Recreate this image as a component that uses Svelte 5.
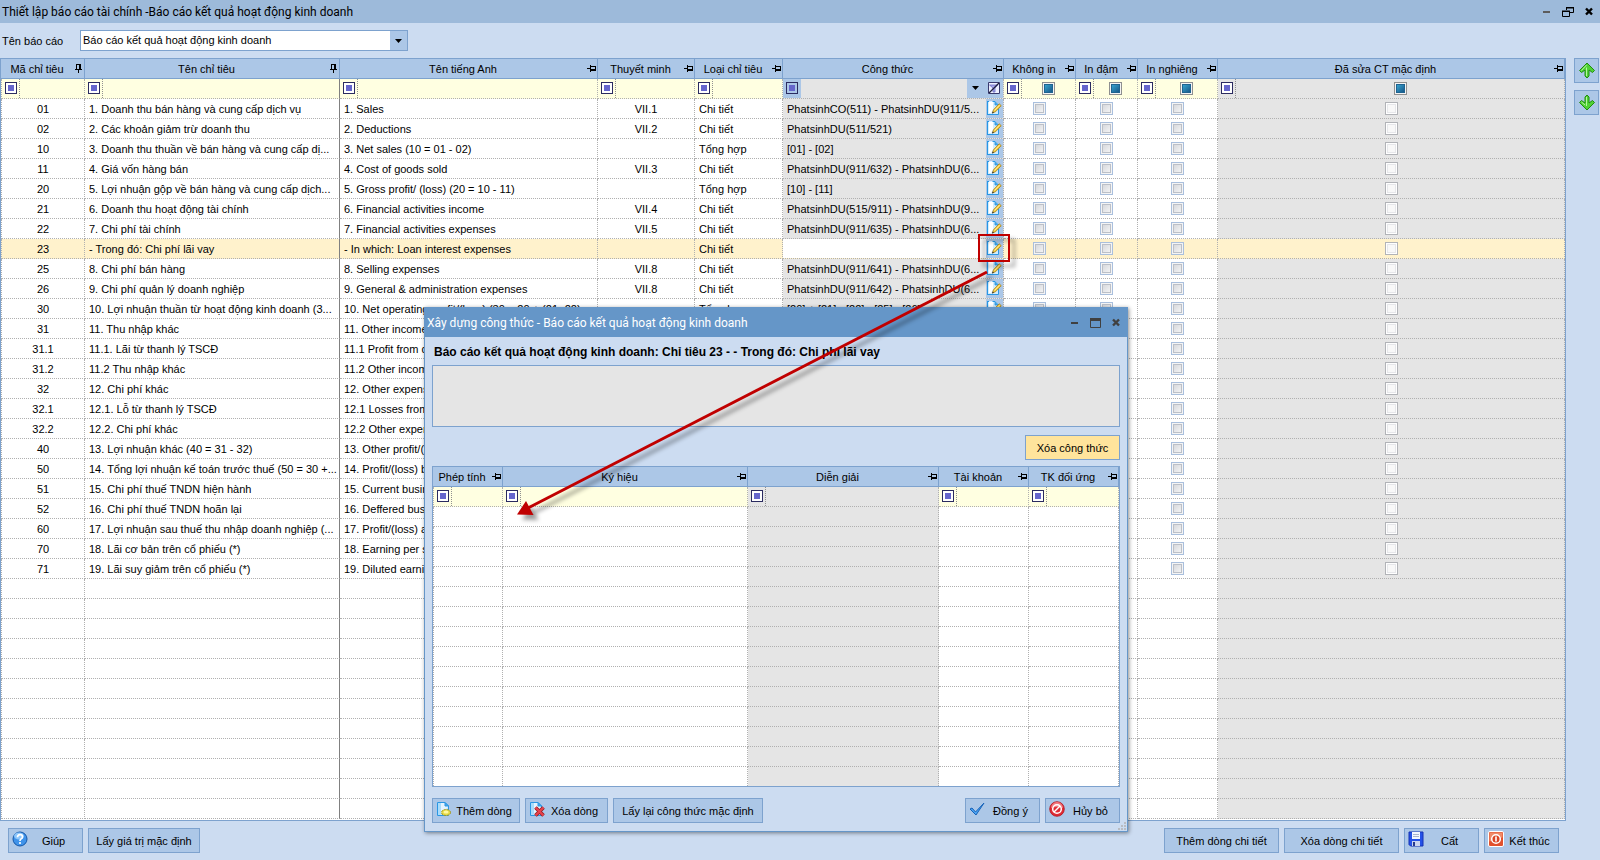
<script lang="ts">
  type Row = {
    code: string;
    name: string;
    english: string;
    note: string;
    kind: string;
    formula: string;
  };

  const detail = 'Chi tiết';
  const total = 'Tổng hợp';

  const source: string[][] = [
    ['01', '1. Doanh thu bán hàng và cung cấp dịch vụ', '1. Sales', 'VII.1', detail, 'PhatsinhCO(511) - PhatsinhDU(911/5...'],
    ['02', '2. Các khoản giảm trừ doanh thu', '2. Deductions', 'VII.2', detail, 'PhatsinhDU(511/521)'],
    ['10', '3. Doanh thu thuần về bán hàng và cung cấp dị...', '3. Net sales (10 = 01 - 02)', '', total, '[01] - [02]'],
    ['11', '4. Giá vốn hàng bán', '4. Cost of goods sold', 'VII.3', detail, 'PhatsinhDU(911/632) - PhatsinhDU(6...'],
    ['20', '5. Lợi nhuận gộp về bán hàng và cung cấp dịch...', '5. Gross profit/ (loss) (20 = 10 - 11)', '', total, '[10] - [11]'],
    ['21', '6. Doanh thu hoạt động tài chính', '6. Financial activities income', 'VII.4', detail, 'PhatsinhDU(515/911) - PhatsinhDU(9...'],
    ['22', '7. Chi phí tài chính', '7. Financial activities expenses', 'VII.5', detail, 'PhatsinhDU(911/635) - PhatsinhDU(6...'],
    ['23', '- Trong đó: Chi phí lãi vay', '- In which: Loan interest expenses', '', detail, ''],
    ['25', '8. Chi phí bán hàng', '8. Selling expenses', 'VII.8', detail, 'PhatsinhDU(911/641) - PhatsinhDU(6...'],
    ['26', '9. Chi phí quản lý doanh nghiệp', '9. General & administration expenses', 'VII.8', detail, 'PhatsinhDU(911/642) - PhatsinhDU(6...'],
    ['30', '10. Lợi nhuận thuần từ hoạt động kinh doanh (3...', '10. Net operating profit/(loss) (30 = 20 + (21- 22)', '', total, '[20] + [21] - [22] - [25] - [26]'],
    ['31', '11. Thu nhập khác', '11. Other income', '', detail, ''],
    ['31.1', '11.1. Lãi từ thanh lý TSCĐ', '11.1 Profit from disposal', '', detail, ''],
    ['31.2', '11.2 Thu nhập khác', '11.2 Other income', '', detail, ''],
    ['32', '12. Chi phí khác', '12. Other expenses', '', detail, ''],
    ['32.1', '12.1. Lỗ từ thanh lý TSCĐ', '12.1 Losses from disposal', '', detail, ''],
    ['32.2', '12.2. Chi phí khác', '12.2 Other expenses', '', detail, ''],
    ['40', '13. Lợi nhuận khác (40 = 31 - 32)', '13. Other profit/(loss)', '', total, ''],
    ['50', '14. Tổng lợi nhuận kế toán trước thuế (50 = 30 +...', '14. Profit/(loss) before tax', '', total, ''],
    ['51', '15. Chi phí thuế TNDN hiện hành', '15. Current business tax', '', detail, ''],
    ['52', '16. Chi phí thuế TNDN hoãn lại', '16. Deffered business tax', '', detail, ''],
    ['60', '17. Lợi nhuận sau thuế thu nhập doanh nghiệp (...', '17. Profit/(loss) after tax', '', total, ''],
    ['70', '18. Lãi cơ bản trên cổ phiếu (*)', '18. Earning per share', '', detail, ''],
    ['71', '19. Lãi suy giảm trên cổ phiếu (*)', '19. Diluted earning per share', '', detail, '']
  ];

  const rows: Row[] = source.map(([code, name, english, note, kind, formula]) => ({
    code, name, english, note, kind, formula
  }));

  const emptyRows = Array.from({ length: 12 });
  const dialogRows = Array.from({ length: 14 });

  const columns = [
    { title: 'Mã chỉ tiêu', cls: 'code', pinned: true, filter: 'text' },
    { title: 'Tên chỉ tiêu', cls: 'name', pinned: true, filter: 'text' },
    { title: 'Tên tiếng Anh', cls: 'english', pinned: false, filter: 'text' },
    { title: 'Thuyết minh', cls: 'note', pinned: false, filter: 'text' },
    { title: 'Loại chỉ tiêu', cls: 'kind', pinned: false, filter: 'text' },
    { title: 'Công thức', cls: 'formula', pinned: false, filter: 'active' },
    { title: 'Không in', cls: 'hide', pinned: false, filter: 'check' },
    { title: 'In đậm', cls: 'bold', pinned: false, filter: 'check' },
    { title: 'In nghiêng', cls: 'italic', pinned: false, filter: 'check' },
    { title: 'Đã sửa CT mặc định', cls: 'edited', pinned: false, filter: 'check' }
  ];

  const dialogColumns = [
    { title: 'Phép tính', cls: 'operator' },
    { title: 'Ký hiệu', cls: 'symbol' },
    { title: 'Diễn giải', cls: 'explain' },
    { title: 'Tài khoản', cls: 'account' },
    { title: 'TK đối ứng', cls: 'contra' }
  ];

  let selected = $state('23');
  let report = $state('Báo cáo kết quả hoạt động kinh doanh');
</script>

{#snippet pin(vertical: boolean)}
  <svg class="pin" width="9" height="9" viewBox="0 0 9 9" shape-rendering="crispEdges" aria-hidden="true">
    {#if vertical}
      <path d="M2 0h5v1H2zM2 0h1v6H2zM5 0h2v6H5zM1 5h7v1H1zM4 6h1v3H4z" />
    {:else}
      <path d="M0 4h3v1H0zM3 1h1v7H3zM4 2h5v1H4zM8 2h1v5H8zM4 5h5v2H4z" />
    {/if}
  </svg>
{/snippet}

{#snippet heading(title: string, vertical: boolean)}
  <div class="head">
    <span>{title}</span>
    {@render pin(vertical)}
  </div>
{/snippet}

{#snippet textFilter(title: string)}
  <div class="filter">
    <button class="operator-btn" aria-label={'Kiểu lọc ' + title}><i></i></button>
    <input class="filter-text" type="text" aria-label={'Lọc ' + title} />
  </div>
{/snippet}

{#snippet page()}
  <path d="M1.500 1.500h7.500l3.500 3.500v9.500h-11z" fill="#e4f4ff" stroke="#2a97e4" />
  <path d="M2 2h3v12h-3z" fill="#a9dcfb" />
  <path d="M4 14l8-8v8z" fill="#bfe2fb" />
  <path d="M9 1.500v3.500h3.500z" fill="#4ba9ea" stroke="#2a97e4" />
{/snippet}

{#snippet editIcon()}
  <svg width="16" height="16" viewBox="0 0 16 16" aria-hidden="true">
    <path d="M1 1h8l3 3v10H1z" fill="#d3edfd" />
    <path d="M1.500 1v13.500M1 1.500h2M1 14.500h11.500V9M6 1.500h3" fill="none" stroke="#2a97e4" />
    <path d="M3 2l4-0.500V9l-2 4H3z" fill="#fff" />
    <path d="M9 1.500l3.500 3.500H9z" fill="#4ba9ea" stroke="#2a97e4" stroke-width="0.800" />
    <path d="M6.500 13l1-3.300 5.700-5.900 2 1.900-5.600 6z" fill="#f3c93c" stroke="#a8821c" stroke-width="0.800" />
    <path d="M8.500 10.500l5-5.300" stroke="#fff0a0" />
    <path d="M6 13.500l0.600-2 1.500 1.300z" fill="#333" />
  </svg>
{/snippet}

<div class="window">
  <header class="titlebar">
    <h1>Thiết lập báo cáo tài chính -Báo cáo kết quả hoạt động kinh doanh</h1>
    <div class="window-controls">
      <button aria-label="Thu nhỏ">
        <svg width="12" height="12" viewBox="0 0 12 12"><path d="M2 6h7" stroke="#5c5c5c" stroke-width="2" /></svg>
      </button>
      <button aria-label="Khôi phục">
        <svg width="12" height="12" viewBox="0 0 12 12">
          <path d="M4.500 4V1.500h7v5H8M0.500 5.500h7v5h-7z" fill="none" stroke="#000" />
          <path d="M4 1h8v1.500H4zM0 4.500h8V6H0z" />
        </svg>
      </button>
      <button aria-label="Đóng">
        <svg width="12" height="12" viewBox="0 0 12 12"><path d="M3 2.500l6 6M9 2.500l-6 6" stroke="#000" stroke-width="2.400" /></svg>
      </button>
    </div>
  </header>

  <div class="report-bar">
    <label for="report">Tên báo cáo</label>
    <div class="select-wrap">
      <select id="report" bind:value={report}>
        <option>Báo cáo kết quả hoạt động kinh doanh</option>
      </select>
      <svg class="caret" width="7" height="4" viewBox="0 0 7 4" aria-hidden="true"><path d="M0 0h7l-3.500 4z" /></svg>
    </div>
  </div>

  <div class="content">
    <div class="grid">
      <table>
        <colgroup>
          {#each columns as column}
            <col class="w-{column.cls}" />
          {/each}
        </colgroup>
        <thead>
          <tr>
            {#each columns as column}
              <th>{@render heading(column.title, column.pinned)}</th>
            {/each}
          </tr>
          <tr class="filters">
            {#each columns as column}
              <td class={column.cls}>
                {#if column.filter === 'text'}
                  {@render textFilter(column.title)}
                {:else if column.filter === 'active'}
                  <div class="filter active">
                    <button class="operator-btn" aria-label="Kiểu lọc Công thức"><i></i></button>
                    <input class="filter-text" type="text" aria-label="Lọc Công thức" />
                    <button class="drop" aria-label="Chọn giá trị lọc">
                      <svg width="7" height="4" viewBox="0 0 7 4"><path d="M0 0h7l-3.500 4z" /></svg>
                    </button>
                    <button class="clear" aria-label="Xóa lọc">
                      <svg width="12" height="12" viewBox="0 0 12 12">
                        <path d="M0.500 0.500h11v11h-11z" fill="#eef0ff" stroke="#3a3a6e" />
                        <path d="M1.500 3h8L7 6v4H5V6z" fill="#a9a9ea" stroke="#6a6ac4" stroke-width="0.800" />
                        <path d="M1 11L11 1" stroke="#20203c" stroke-width="1.200" />
                      </svg>
                    </button>
                  </div>
                {:else}
                  <div class="filter">
                    <button class="operator-btn" aria-label={'Kiểu lọc ' + column.title}><i></i></button>
                    <span class="filter-check">
                      <input class="tri" type="checkbox" aria-label={'Lọc ' + column.title} />
                    </span>
                  </div>
                {/if}
              </td>
            {/each}
          </tr>
        </thead>
        <tbody>
          {#each rows as row}
            <tr class:selected={row.code === selected} onclick={() => (selected = row.code)}>
              <td class="code">{row.code}</td>
              <td class="name">{row.name}</td>
              <td class="english">{row.english}</td>
              <td class="note">{row.note}</td>
              <td class="kind">{row.kind}</td>
              <td class="formula">
                <div class="formula-cell">
                  <span>{row.formula}</span>
                  <button aria-label={'Xây dựng công thức ' + row.code}>{@render editIcon()}</button>
                </div>
              </td>
              <td class="hide"><input type="checkbox" aria-label={'Không in ' + row.code} /></td>
              <td class="bold"><input type="checkbox" aria-label={'In đậm ' + row.code} /></td>
              <td class="italic"><input type="checkbox" aria-label={'In nghiêng ' + row.code} /></td>
              <td class="edited"><input type="checkbox" disabled aria-label={'Đã sửa CT mặc định ' + row.code} /></td>
            </tr>
          {/each}
          {#each emptyRows as _}
            <tr>
              {#each columns as column}
                <td class={column.cls}></td>
              {/each}
            </tr>
          {/each}
        </tbody>
      </table>
    </div>

    <div class="move">
      <button aria-label="Chuyển lên">
        <svg width="18" height="18" viewBox="0 0 18 18">
          <path d="M9 1L1.500 8.500 3.500 10.500l3.500-2.500V14l2 2 2-2V8l3.500 2.500 2-2z" fill="#4fd235" stroke="#218c10" stroke-linejoin="round" />
          <path d="M8.500 3L3.500 8.500M8.500 5.500v8.500" stroke="#b5f59f" />
        </svg>
      </button>
      <button aria-label="Chuyển xuống">
        <svg width="18" height="18" viewBox="0 0 18 18">
          <path d="M9 16L1.500 8.500 3.500 6.500 7 9V3l2-2 2 2v6l3.500-2.500 2 2z" fill="#4fd235" stroke="#218c10" stroke-linejoin="round" />
          <path d="M8.500 3v9M3.500 8l3.500 3" stroke="#b5f59f" />
        </svg>
      </button>
    </div>
  </div>

  <footer>
    <button class="btn">
      <svg width="16" height="16" viewBox="0 0 16 16">
        <circle cx="8" cy="8" r="7" fill="#3f93ea" stroke="#1457a8" />
        <ellipse cx="7" cy="5" rx="5" ry="3.500" fill="#8cc6fb" />
        <path d="M5.500 6.200q0-2.500 2.500-2.500t2.500 2.200q0 1.200-1.300 2T8 10" fill="none" stroke="#fff" stroke-width="1.700" />
        <circle cx="8" cy="12" r="1.100" fill="#fff" />
      </svg>
      <span>Giúp</span>
    </button>
    <button class="btn w112"><span>Lấy giá trị mặc định</span></button>
    <div class="spacer"></div>
    <button class="btn w115"><span>Thêm dòng chi tiết</span></button>
    <button class="btn w115"><span>Xóa dòng chi tiết</span></button>
    <button class="btn">
      <svg width="16" height="16" viewBox="0 0 16 16">
        <path d="M1 1h14v14H2.500L1 13.500z" fill="#2451e8" stroke="#1632b4" />
        <path d="M4 1h8v7H4z" fill="#f2f6ff" />
        <path d="M5 3.500h6M5 5.500h6" stroke="#a9b4cc" />
        <path d="M4 10h8v5H4z" fill="#c9d4ee" />
        <path d="M5 11h2v4H5z" fill="#24398f" />
      </svg>
      <span>Cất</span>
    </button>
    <button class="btn">
      <svg width="16" height="16" viewBox="0 0 16 16">
        <rect x="0.500" y="0.500" width="15" height="15" rx="1.500" fill="#e2512d" stroke="#fff" />
        <path d="M1.500 1.500h13v5q-6 1-13 4z" fill="#f08a68" />
        <circle cx="8" cy="8" r="4.300" fill="#dc4524" stroke="#fff" stroke-width="1.500" />
        <path d="M8 5.500v5" stroke="#fff" stroke-width="1.600" />
      </svg>
      <span>Kết thúc</span>
    </button>
  </footer>

  <div class="dialog" role="dialog" aria-labelledby="dialog-title">
    <header class="dialog-title">
      <h2 id="dialog-title">Xây dựng công thức - Báo cáo kết quả hoạt động kinh doanh</h2>
      <div class="window-controls">
        <button aria-label="Thu nhỏ hộp thoại">
          <svg width="12" height="12" viewBox="0 0 12 12"><path d="M2 6h7" stroke="#404040" stroke-width="2" /></svg>
        </button>
        <button aria-label="Phóng to hộp thoại">
          <svg width="12" height="12" viewBox="0 0 12 12">
            <path d="M0.500 1.500h10v9h-10z" fill="none" stroke="#404040" />
            <path d="M0 1h11v3H0z" fill="#404040" />
          </svg>
        </button>
        <button aria-label="Đóng hộp thoại">
          <svg width="12" height="12" viewBox="0 0 12 12"><path d="M2 2.500l6 6M8 2.500l-6 6" stroke="#404040" stroke-width="2.400" /></svg>
        </button>
      </div>
    </header>
    <div class="dialog-body">
      <label class="formula-label" for="formula-text">Báo cáo kết quả hoạt động kinh doanh: Chỉ tiêu 23 - - Trong đó: Chi phí lãi vay</label>
      <textarea id="formula-text" readonly></textarea>
      <button class="btn erase"><span>Xóa công thức</span></button>
      <div class="dialog-grid">
        <table>
          <colgroup>
            {#each dialogColumns as column}
              <col class="w-{column.cls}" />
            {/each}
          </colgroup>
          <thead>
            <tr>
              {#each dialogColumns as column}
                <th>{@render heading(column.title, false)}</th>
              {/each}
            </tr>
            <tr class="filters">
              {#each dialogColumns as column}
                <td class={column.cls}>{@render textFilter(column.title)}</td>
              {/each}
            </tr>
          </thead>
          <tbody>
            {#each dialogRows as _}
              <tr>
                {#each dialogColumns as column}
                  <td class={column.cls}></td>
                {/each}
              </tr>
            {/each}
          </tbody>
        </table>
      </div>
      <div class="dialog-actions">
        <button class="btn w88">
          <svg width="16" height="16" viewBox="0 0 16 16">
            {@render page()}
            <ellipse cx="10" cy="11.500" rx="4.500" ry="3" fill="#e8dc4a" stroke="#9b8f18" stroke-dasharray="2 1" />
            <ellipse cx="10" cy="11" rx="2.500" ry="1.500" fill="#fff8a0" />
          </svg>
          <span>Thêm dòng</span>
        </button>
        <button class="btn w83">
          <svg width="16" height="16" viewBox="0 0 16 16">
            {@render page()}
            <path d="M6.500 6.500l8 8M14.500 6.500l-8 8" stroke="#8f1a20" stroke-width="3.600" />
            <path d="M6.500 6.500l8 8M14.500 6.500l-8 8" stroke="#e8434c" stroke-width="2.200" />
          </svg>
          <span>Xóa dòng</span>
        </button>
        <button class="btn w150"><span>Lấy lại công thức mặc định</span></button>
        <div class="spacer"></div>
        <button class="btn">
          <svg width="16" height="16" viewBox="0 0 16 16">
            <path d="M1 8l2-1 3.500 4L15 2 7 14z" fill="#4aa3f2" stroke="#1762b8" stroke-linejoin="round" />
          </svg>
          <span>Đồng ý</span>
        </button>
        <button class="btn">
          <svg width="16" height="16" viewBox="0 0 16 16">
            <circle cx="8" cy="8" r="7.300" fill="#e02b35" stroke="#b3141d" stroke-width="0.800" />
            <path d="M2 7a6 6 0 0 1 12 0q-6-2-12 0z" fill="#f27a80" />
            <circle cx="8" cy="8" r="4.300" fill="none" stroke="#fff" stroke-width="1.500" />
            <path d="M5 11l6-6" stroke="#fff" stroke-width="1.500" />
          </svg>
          <span>Hủy bỏ</span>
        </button>
      </div>
    </div>
    <svg class="grip" width="8" height="8" viewBox="0 0 8 8" aria-hidden="true">
      <path d="M6 0h2v2H6zM3 3h2v2H3zM6 3h2v2H6zM0 6h2v2H0zM3 6h2v2H3zM6 6h2v2H6z" fill="#b9bcc2" />
    </svg>
  </div>

  <!-- callout from the edit button to the dialog -->
  <svg class="callout" width="520" height="300" viewBox="500 230 520 300" aria-hidden="true">
    <g class="shadow">
      <rect x="979" y="235" width="30" height="26" fill="none" stroke="#c00000" stroke-width="2" />
      <path d="M987 272L528 508" stroke="#c00000" stroke-width="3" />
      <path d="M517 514.500l9-13.500 7.500 14z" fill="#c00000" />
    </g>
  </svg>
</div>

<style>
  :global(body) {
    margin: 0;
    background: #ccdcf1;
  }

  .window {
    position: relative;
    min-height: 100vh;
    background: #ccdcf1;
    color: #000;
    font-family: 'Liberation Sans', Arial, sans-serif;
    font-size: 11px;
    line-height: 14px;
    overflow: hidden;
  }

  button,
  input,
  select,
  textarea {
    font: inherit;
    color: inherit;
    margin: 0;
    padding: 0;
    border-radius: 0;
    box-sizing: border-box;
  }

  button {
    border: 0;
    background: none;
  }

  svg {
    display: block;
    flex: none;
  }

  h1,
  h2 {
    flex: 1;
    margin: 0;
    font-family: Roboto, 'Open Sans', sans-serif;
    font-size: 12px;
    font-weight: normal;
    line-height: 16px;
  }

  .titlebar {
    display: flex;
    align-items: center;
    height: 23px;
    padding: 0 5px 0 2px;
    background: #9dbada;
  }

  .window-controls {
    display: flex;
    gap: 9px;
  }

  .report-bar {
    display: flex;
    align-items: center;
    height: 35px;
    padding-left: 2px;
  }

  .report-bar label {
    width: 78px;
  }

  .select-wrap {
    position: relative;
    width: 328px;
  }

  select {
    display: block;
    width: 100%;
    height: 21px;
    padding: 0 20px 1px 2px;
    appearance: none;
    border: 1px solid #7da2ce;
    background: linear-gradient(#acc7e7, #acc7e7) right / 17px 100% no-repeat #fff;
  }

  .caret {
    position: absolute;
    top: 9px;
    right: 6px;
    pointer-events: none;
  }

  .content {
    display: flex;
    gap: 8px;
  }

  .grid {
    flex: 1;
    min-width: 0;
    padding-bottom: 1px;
    border: 1px solid #7da2ce;
    background: #fff;
  }

  table {
    width: 100%;
    table-layout: fixed;
    border-collapse: separate;
    border-spacing: 0;
  }

  .w-code { width: 84px; }
  .w-name { width: 255px; }
  .w-english { width: 258px; }
  .w-note { width: 97px; }
  .w-kind { width: 88px; }
  .w-formula { width: 221px; }
  .w-hide { width: 72px; }
  .w-bold { width: 62px; }
  .w-italic { width: 80px; }
  .w-operator { width: 70px; }
  .w-symbol { width: 245px; }
  .w-explain { width: 191px; }
  .w-account { width: 90px; }

  th,
  td {
    box-sizing: border-box;
    height: 20px;
    padding: 0;
    text-align: left;
    vertical-align: middle;
    white-space: nowrap;
    overflow: hidden;
    text-overflow: ellipsis;
  }

  th {
    border-right: 1px solid #7da2ce;
    border-bottom: 1px solid #7da2ce;
    background: #acc7e7;
    font-weight: normal;
  }

  td {
    border-right: 1px dotted #b0b0b0;
    border-bottom: 1px dotted #b0b0b0;
    background: #fff;
  }

  td:first-child {
    border-left: 1px dotted #b0b0b0;
  }

  .head {
    display: flex;
    align-items: center;
  }

  .head span {
    flex: 1;
    text-align: center;
  }

  .pin {
    margin: 0 1px;
  }

  tbody td.name,
  tbody td.english,
  tbody td.kind {
    padding-left: 4px;
  }

  td.name {
    border-right: 1px solid #808080;
  }

  tbody td.code,
  tbody td.note,
  tbody td.hide,
  tbody td.bold,
  tbody td.italic,
  tbody td.edited {
    text-align: center;
  }

  td.formula,
  td.edited,
  td.explain {
    background: #e5e5e5;
  }

  .filters td {
    background: #ffffe1;
  }

  .filters td.formula,
  .filters td.edited,
  .filters td.explain {
    background: #e5e5e5;
  }

  .filter {
    display: flex;
    align-items: center;
    height: 19px;
  }

  .operator-btn {
    flex: none;
    display: flex;
    align-items: center;
    justify-content: center;
    width: 18px;
    height: 19px;
    padding-bottom: 1px;
    border-right: 1px dotted #909090;
  }

  .operator-btn i {
    box-sizing: border-box;
    width: 12px;
    height: 12px;
    border: 1px solid #2b2b60;
    background: #66c;
    box-shadow: inset 0 0 0 2px #fff;
  }

  .filter-text {
    flex: 1;
    min-width: 0;
    height: 17px;
    border: 0;
    outline: 0;
    background: transparent;
  }

  .filter-check {
    flex: 1;
    display: flex;
    justify-content: center;
  }

  .active .operator-btn {
    border-right: 0;
    background: #acc7e7;
  }

  .active .operator-btn i {
    box-shadow: inset 0 0 0 2px #acc7e7;
  }

  .drop,
  .clear {
    display: flex;
    align-items: center;
    justify-content: center;
    width: 18px;
    height: 19px;
    padding: 0 1px 1px 0;
    background: #acc7e7;
  }

  .formula-cell {
    display: flex;
    align-items: center;
    height: 19px;
  }

  .formula-cell span {
    flex: 1;
    min-width: 0;
    padding-left: 4px;
    overflow: hidden;
    text-overflow: ellipsis;
  }

  .formula-cell button {
    width: 17px;
    height: 19px;
    padding-bottom: 2px;
    background: #acc7e7;
  }

  input[type='checkbox'] {
    display: block;
    width: 13px;
    height: 13px;
    margin: 0 auto;
    appearance: none;
    border: 1px solid #a9bfdd;
    background: linear-gradient(135deg, #cfd1d6, #fbfbfb);
    box-shadow: inset 0 0 0 1px #f4f4f4, inset 0 0 0 2px #bcc0c8;
  }

  input[type='checkbox']:disabled {
    border-color: #b1b3b7;
    background: #f8f8f8;
    box-shadow: inset 0 0 0 1px #fff, inset 0 0 0 2px #e6e7ea;
  }

  input[type='checkbox'].tri {
    border-color: #8e8f8f;
    background: linear-gradient(135deg, #3fb6e0, #0f4577);
    box-shadow: inset 0 0 0 1px #f4f4f4, inset 0 0 0 2px #1f6390;
  }

  .selected td,
  .selected td.edited {
    background: #fff2cc;
  }

  .selected .formula-cell span {
    box-sizing: border-box;
    height: 19px;
    background: #fff;
  }

  .move {
    display: flex;
    flex-direction: column;
    gap: 7px;
    padding-right: 1px;
  }

  .move button {
    display: flex;
    align-items: center;
    justify-content: center;
    width: 25px;
    height: 25px;
    border: 1px solid #7da2ce;
    background: #acc7e7;
  }

  footer {
    display: flex;
    gap: 5px;
    padding: 7px 41px 7px 8px;
  }

  .spacer {
    flex: 1;
  }

  .btn {
    display: flex;
    align-items: center;
    min-width: 75px;
    height: 25px;
    padding: 0 3px;
    border: 1px solid #7da2ce;
    background: #acc7e7;
    white-space: nowrap;
  }

  .btn svg {
    margin-bottom: 3px;
  }

  .btn span {
    flex: 1;
    text-align: center;
  }

  .w83 { width: 83px; }
  .w88 { width: 88px; }
  .w112 { width: 112px; }
  .w115 { width: 115px; }
  .w150 { width: 150px; }

  .dialog {
    position: absolute;
    top: 307px;
    left: 424px;
    width: 704px;
    box-sizing: border-box;
    border: 1px solid #6596c8;
    background: #ccdcf1;
    box-shadow: 1px 1px 4px rgb(0 0 0 / 45%);
  }

  .dialog-title {
    display: flex;
    align-items: center;
    height: 29px;
    padding: 0 4px 0 2px;
    background: #6596c8;
    color: #fff;
  }

  .dialog-body {
    display: flex;
    flex-direction: column;
    padding: 0 7px 8px;
  }

  .formula-label {
    padding: 8px 2px 6px;
    font-size: 12px;
    font-weight: bold;
  }

  textarea {
    height: 62px;
    border: 1px solid #7da2ce;
    outline: 0;
    background: #e5e5e5;
    resize: none;
  }

  .erase {
    align-self: flex-end;
    width: 95px;
    margin: 8px 0 6px;
    background: #ffe49c;
  }

  .dialog-grid {
    margin-bottom: 11px;
    border: 1px solid #7da2ce;
  }

  .dialog-grid tr:last-child td {
    height: 19px;
    border-bottom: 0;
  }

  .dialog-grid thead tr:last-child td {
    height: 20px;
    border-bottom: 1px dotted #b0b0b0;
  }

  .dialog-actions {
    display: flex;
    gap: 5px;
  }

  .grip {
    position: absolute;
    right: 1px;
    bottom: 1px;
  }

  .callout {
    position: absolute;
    top: 230px;
    left: 500px;
    pointer-events: none;
  }

  .shadow {
    filter: drop-shadow(5px 5px 2px rgb(0 0 0 / 40%));
  }
</style>
